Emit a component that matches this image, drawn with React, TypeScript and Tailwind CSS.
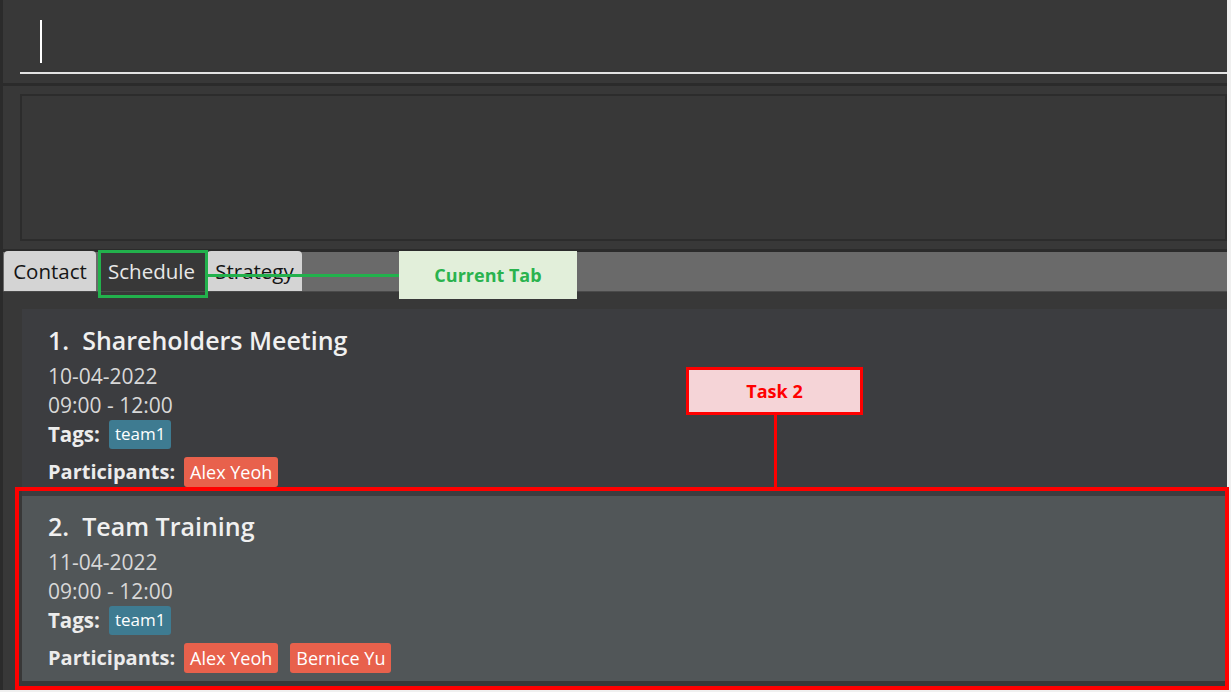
import React from "react";

type Task = {
  id: number;
  name: string;
  date: string;
  time: string;
  tags: string[];
  participants: string[];
};

const TASKS: Task[] = [
  {
    id: 1,
    name: "Shareholders Meeting",
    date: "10-04-2022",
    time: "09:00 - 12:00",
    tags: ["team1"],
    participants: ["Alex Yeoh"],
  },
  {
    id: 2,
    name: "Team Training",
    date: "11-04-2022",
    time: "09:00 - 12:00",
    tags: ["team1"],
    participants: ["Alex Yeoh", "Bernice Yu"],
  },
];

function TaskCard({ task, odd }: { task: Task; odd: boolean }) {
  return (
    <div
      className={
        odd
          ? "flex flex-col bg-[#515658] pb-[8px] pl-[26px] pt-[10px]"
          : "flex flex-col bg-[#3c3d40] pb-[9px] pl-[26px] pt-[11px]"
      }
    >
      <div className="flex h-[40px] items-center gap-[13px] pt-[2px] text-[25px] font-semibold text-[#f0f0f0]">
        <span>{task.id}.</span>
        <span>{task.name}</span>
      </div>
      <div className="h-[29px] text-[21px] leading-[32px] text-[#d8d8d8]">
        {task.date}
      </div>
      <div className="h-[29px] text-[21px] leading-[32px] text-[#d8d8d8]">
        {task.time}
      </div>
      <div className="flex h-[31px] items-center gap-[9px] pt-[1px]">
        <span className="text-[20.5px] font-bold text-[#ececec]">Tags:</span>
        {task.tags.map((t) => (
          <span
            key={t}
            className="flex h-[29px] items-center rounded-[3px] bg-[#3e7b91] px-[6px] text-[17px] text-white"
          >
            {t}
          </span>
        ))}
      </div>
      <div className="mt-[8px] flex h-[30px] items-center gap-[9px]">
        <span className="text-[20px] font-bold text-[#ececec]">
          Participants:
        </span>
        <div className="flex gap-[12px]">
          {task.participants.map((p) => (
            <span
              key={p}
              className="flex h-[30px] items-center rounded-[3px] bg-[#e8614c] px-[6px] text-[18px] text-white"
            >
              {p}
            </span>
          ))}
        </div>
      </div>
    </div>
  );
}

export default function App() {
  return (
    <div className="relative h-[692px] w-[1231px] overflow-hidden bg-[#f0f0f0] font-['Open_Sans','Noto_Sans',sans-serif]">
      <div className="flex h-[690px] w-[1227px] flex-col border-l-[3px] border-[#2b2b2b] bg-[#383838]">
        {/* command box */}
        <div className="h-[83px] pl-[17px] pt-[20px]">
          <div className="flex h-[54px] items-start border-b-2 border-[#e4e4e4] pl-[20px]">
            <span className="h-[43px] w-[1.5px] bg-white" />
          </div>
        </div>
        <div className="h-[3px] bg-[#2b2b2b]" />

        {/* result display */}
        <div className="pl-[17px] pt-[8px]">
          <div className="h-[147px] border-2 border-[#2c2c2c] bg-[#383838]" />
        </div>
        <div className="h-[8px]" />
        <div className="h-[3px] bg-[#2b2b2b]" />

        {/* tabs */}
        <div className="flex h-[40px] items-end gap-[3px] border-b border-[#4a4a4a] bg-[#6a6a6a] pl-[1px]">
          <div className="flex h-[40px] w-[92px] items-center justify-center rounded-t-[4px] bg-[#d4d4d4] text-[20.5px] text-[#151515]">
            Contact
          </div>
          <div className="-mr-[3px] flex h-[40px] w-[108px] items-center rounded-t-[4px] bg-[#383838] pl-[9px] text-[20.5px] text-[#e8e8e8]">
            Schedule
          </div>
          <div className="flex h-[40px] w-[95px] items-center justify-center rounded-t-[4px] bg-[#d4d4d4] text-[20.5px] text-[#151515]">
            Strategy
          </div>
        </div>

        {/* task list */}
        <div className="flex flex-col pl-[19px] pt-[17px]">
          {TASKS.map((t, i) => (
            <TaskCard key={t.id} task={t} odd={i % 2 === 1} />
          ))}
        </div>
      </div>

      {/* annotations */}
      <div className="absolute left-[98px] top-[250px] h-[48px] w-[110px] border-[3px] border-[#22b14c]" />
      <div className="absolute left-[208px] top-[274px] h-[3px] w-[192px] bg-[#22b14c]" />
      <div className="absolute left-[399px] top-[251px] flex h-[48px] w-[178px] items-center justify-center bg-[#e2efda] text-[18px] font-bold text-[#2ab34e]">
        Current Tab
      </div>

      <div className="absolute left-[686px] top-[367px] flex h-[48px] w-[177px] items-center justify-center border-[3px] border-[#ff0000] bg-[#f5d4d7] text-[18px] font-bold text-[#ff0000]">
        Task 2
      </div>
      <div className="absolute left-[774px] top-[414px] h-[74px] w-[3px] bg-[#ff0000]" />
      <div className="absolute left-[15px] top-[487px] h-[203px] w-[1214px] border-4 border-[#ff0000]" />
    </div>
  );
}
